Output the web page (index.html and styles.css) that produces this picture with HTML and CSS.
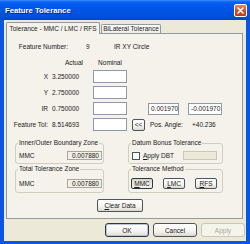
FILE: index.html
```html
<!DOCTYPE html>
<html lang="en">
<head>
  <meta charset="UTF-8" />
  <title>Feature Tolerance</title>
  <link rel="stylesheet" href="styles.css">
</head>
<body>
  <div class="window">
    <div class="titlebar">
      <span class="title">Feature Tolerance</span>
      <span class="close">
        <svg width="7" height="7" viewBox="0 0 7 7"><path d="M1 1L6 6M6 1L1 6" stroke="#fff" stroke-width="1.6" stroke-linecap="round"/></svg>
      </span>
    </div>

    <div class="client">
      <div class="tabs">
        <div class="tab tab-main">Tolerance - MMC / LMC / RFS</div>
        <div class="tab tab-side">BiLateral Tolerance</div>
      </div>

      <div class="panel">
        <div class="feature-row">
          <span class="feat-label">Feature Number:</span>
          <span class="feat-num">9</span>
          <span class="feat-type">IR XY Circle</span>
        </div>

        <div class="fields">
          <span class="col-actual">Actual</span>
          <span class="col-nominal">Nominal</span>

          <span class="lbl">X</span>
          <span class="val">3.250000</span>
          <span class="entry"></span>

          <span class="lbl">Y</span>
          <span class="val">2.750000</span>
          <span class="entry"></span>

          <span class="lbl">IR</span>
          <span class="val">0.750000</span>
          <span class="entry"></span>
          <span class="tol tol-plus">0.001970</span>
          <span class="tol tol-minus">-0.001970</span>

          <span class="lbl">Feature Tol:</span>
          <span class="val">8.514693</span>
          <span class="entry"></span>
          <button class="btn back">&lt;&lt;</button>
          <span class="pos-label">Pos. Angle:</span>
          <span class="pos-value">+40.236</span>
        </div>

        <div class="groups">
          <fieldset class="group">
            <legend>Inner/Outer Boundary Zone</legend>
            <div class="group-row">
              <span>MMC</span>
              <span class="readout">0.007880</span>
            </div>
          </fieldset>
          <fieldset class="group">
            <legend>Datum Bonus Tolerance</legend>
            <div class="group-row">
              <span class="check"></span>
              <span class="check-label"><u>A</u>pply DBT</span>
              <span class="disabled-entry"></span>
            </div>
          </fieldset>
          <fieldset class="group group-low">
            <legend>Total Tolerance Zone</legend>
            <div class="group-row tall">
              <span>MMC</span>
              <span class="readout">0.007880</span>
            </div>
          </fieldset>
          <fieldset class="group group-low">
            <legend>Tolerance Method</legend>
            <div class="method-row">
              <button class="btn method pressed"><u>M</u>MC</button>
              <button class="btn method"><u>L</u>MC</button>
              <button class="btn method"><u>R</u>FS</button>
            </div>
          </fieldset>
        </div>

        <button class="btn clear"><u>C</u>lear Data</button>
      </div>

      <div class="footer">
        <button class="btn action default">OK</button>
        <button class="btn action">Cancel</button>
        <button class="btn action" disabled>Apply</button>
      </div>
    </div>
  </div>
</body>
</html>
```

FILE: styles.css
```css
* {
  box-sizing: border-box;
}
body {
  margin: 0;
  width: 250px;
  height: 244px;
  overflow: hidden;
  font-family: "Liberation Sans", Arial, sans-serif;
  font-size: 6.5px;
  color: #1A1A1A;
  background: #0A55E3;
}
.window {
  display: flex;
  flex-direction: column;
  height: 244px;
}

/* title bar */
.titlebar {
  flex: none;
  height: 20px;
  display: flex;
  align-items: center;
  justify-content: space-between;
  padding: 0 3px 0 5px;
  background: linear-gradient(#3D8EFF 0, #0A62F0 2px, #0058EE 6px, #0054E3 12px, #0050DA 17px, #0044C6 20px);
}
.title {
  color: #fff;
  font-weight: bold;
  font-size: 7.7px;
  text-shadow: 1px 1px 0 #0A1E8C;
}
.close {
  width: 13px;
  height: 13px;
  display: flex;
  align-items: center;
  justify-content: center;
  border: 1px solid #fff;
  border-radius: 2px;
  background: linear-gradient(#EA8564, #D6481F 55%, #C23A16);
}

/* dialog body */
.client {
  flex: 1;
  display: flex;
  flex-direction: column;
  margin: 0 4px 3px;
  background: #ECE9D8;
}
.tabs {
  flex: none;
  display: flex;
  align-items: flex-end;
  height: 11px;
  margin-top: 2px;
  padding-left: 2px;
}
.tab {
  height: 9px;
  line-height: 8px;
  text-align: center;
  white-space: nowrap;
  border: 1px solid #919B9C;
  border-bottom: none;
  border-radius: 2px 2px 0 0;
  background: linear-gradient(#FEFEFE, #ECEBE4);
}
.tab-main {
  position: relative;
  z-index: 1;
  width: 94px;
  height: 12px;
  margin-bottom: -1px;
  line-height: 11px;
  background: #F4F2EA;
}
.tab-side {
  width: 60px;
  margin-left: 1px;
}
.panel {
  flex: none;
  height: 186px;
  margin: 0 3px 0 2px;
  border: 1px solid #919B9C;
  background: #F4F2EA;
}

/* feature info */
.feature-row {
  display: flex;
  height: 10px;
  line-height: 10px;
  margin-top: 8px;
}
.feat-label {
  width: 61px;
  text-align: right;
}
.feat-num {
  width: 10px;
  margin-left: 18px;
}
.feat-type {
  margin-left: 18px;
}

.fields {
  display: grid;
  grid-template-columns: 43px 43px 34px 21px 40px 34px;
  grid-template-rows: 10px repeat(4, 13px);
  row-gap: 3px;
  align-items: center;
  margin-top: 5px;
}
.col-actual {
  grid-column: 2;
  text-align: right;
  padding-right: 10px;
}
.col-nominal {
  grid-column: 3;
  text-align: center;
}
.lbl {
  grid-column: 1;
  text-align: right;
  padding-right: 2px;
}
.val {
  padding-left: 2px;
}
.entry {
  height: 13px;
  background: #fff;
  border: 1px solid #8C9AA8;
}
.tol {
  grid-column: 5;
  height: 12px;
  line-height: 10px;
  padding-left: 2px;
  background: #fff;
  border: 1px solid #8C9AA8;
}
.tol-plus {
  width: 31px;
}
.tol-minus {
  grid-column: 6;
  width: 34px;
}
.back {
  grid-column: 4;
  width: 13px;
  height: 12px;
  margin-left: 5px;
  font-size: 5.5px;
}
.pos-label {
  padding-left: 2px;
}
.pos-value {
  padding-left: 4px;
}

/* group boxes */
.groups {
  display: grid;
  grid-template-columns: 89px 95px;
  column-gap: 24px;
  row-gap: 1px;
  margin: 8px 0 0 8px;
}
.group {
  min-width: 0;
  margin: 0;
  padding: 4px 1px 3px 2px;
  border: 1px solid #CFCEC0;
  border-radius: 3px;
}
.group legend {
  height: 8px;
  line-height: 8px;
  padding: 0 1px;
}
.group-low {
  padding-top: 5px;
}
.group-row {
  display: flex;
  align-items: center;
  justify-content: space-between;
  height: 9px;
  padding-left: 1px;
}
.group-row.tall {
  height: 11px;
}
.readout {
  width: 35px;
  height: 9px;
  line-height: 7px;
  text-align: right;
  padding-right: 2px;
  border: 1px solid #A9A799;
  background: #F1EFE6;
}
.check {
  width: 8px;
  height: 8px;
  background: #fff;
  border: 1px solid #4A5560;
}
.check-label {
  margin-left: 3px;
}
.disabled-entry {
  width: 34px;
  height: 9px;
  margin-left: auto;
  margin-right: 4px;
  border: 1px solid #C9C7BA;
  background: #ECE9D8;
}
.method-row {
  display: flex;
  gap: 10px;
  height: 11px;
}

/* buttons */
.btn {
  padding: 0;
  font: inherit;
  color: #1A1A1A;
  border: 1px solid #4B5661;
  border-radius: 2px;
  background: linear-gradient(#FFFFFF, #F4F3EE 60%, #E4E2D9 88%, #D6D0C5);
}
.method {
  width: 22px;
  height: 11px;
}
.method.pressed {
  border-color: #2E3842;
  background: linear-gradient(#D8D6CB, #E6E4DB 40%, #F0EFE9);
}
.clear {
  display: block;
  width: 46px;
  height: 13px;
  margin: 6px 0 0 90px;
}
.footer {
  display: flex;
  justify-content: flex-end;
  gap: 4px;
  margin: 4px 1px 0 0;
}
.action {
  width: 44px;
  height: 14px;
  border-radius: 3px;
}
.default {
  border-color: #2E3842;
  box-shadow: inset 0 0 0 1px #B8C4D8;
}
.action:disabled {
  color: #ACA899;
  border-color: #C9C7BA;
  background: #F5F4EA;
}
```
